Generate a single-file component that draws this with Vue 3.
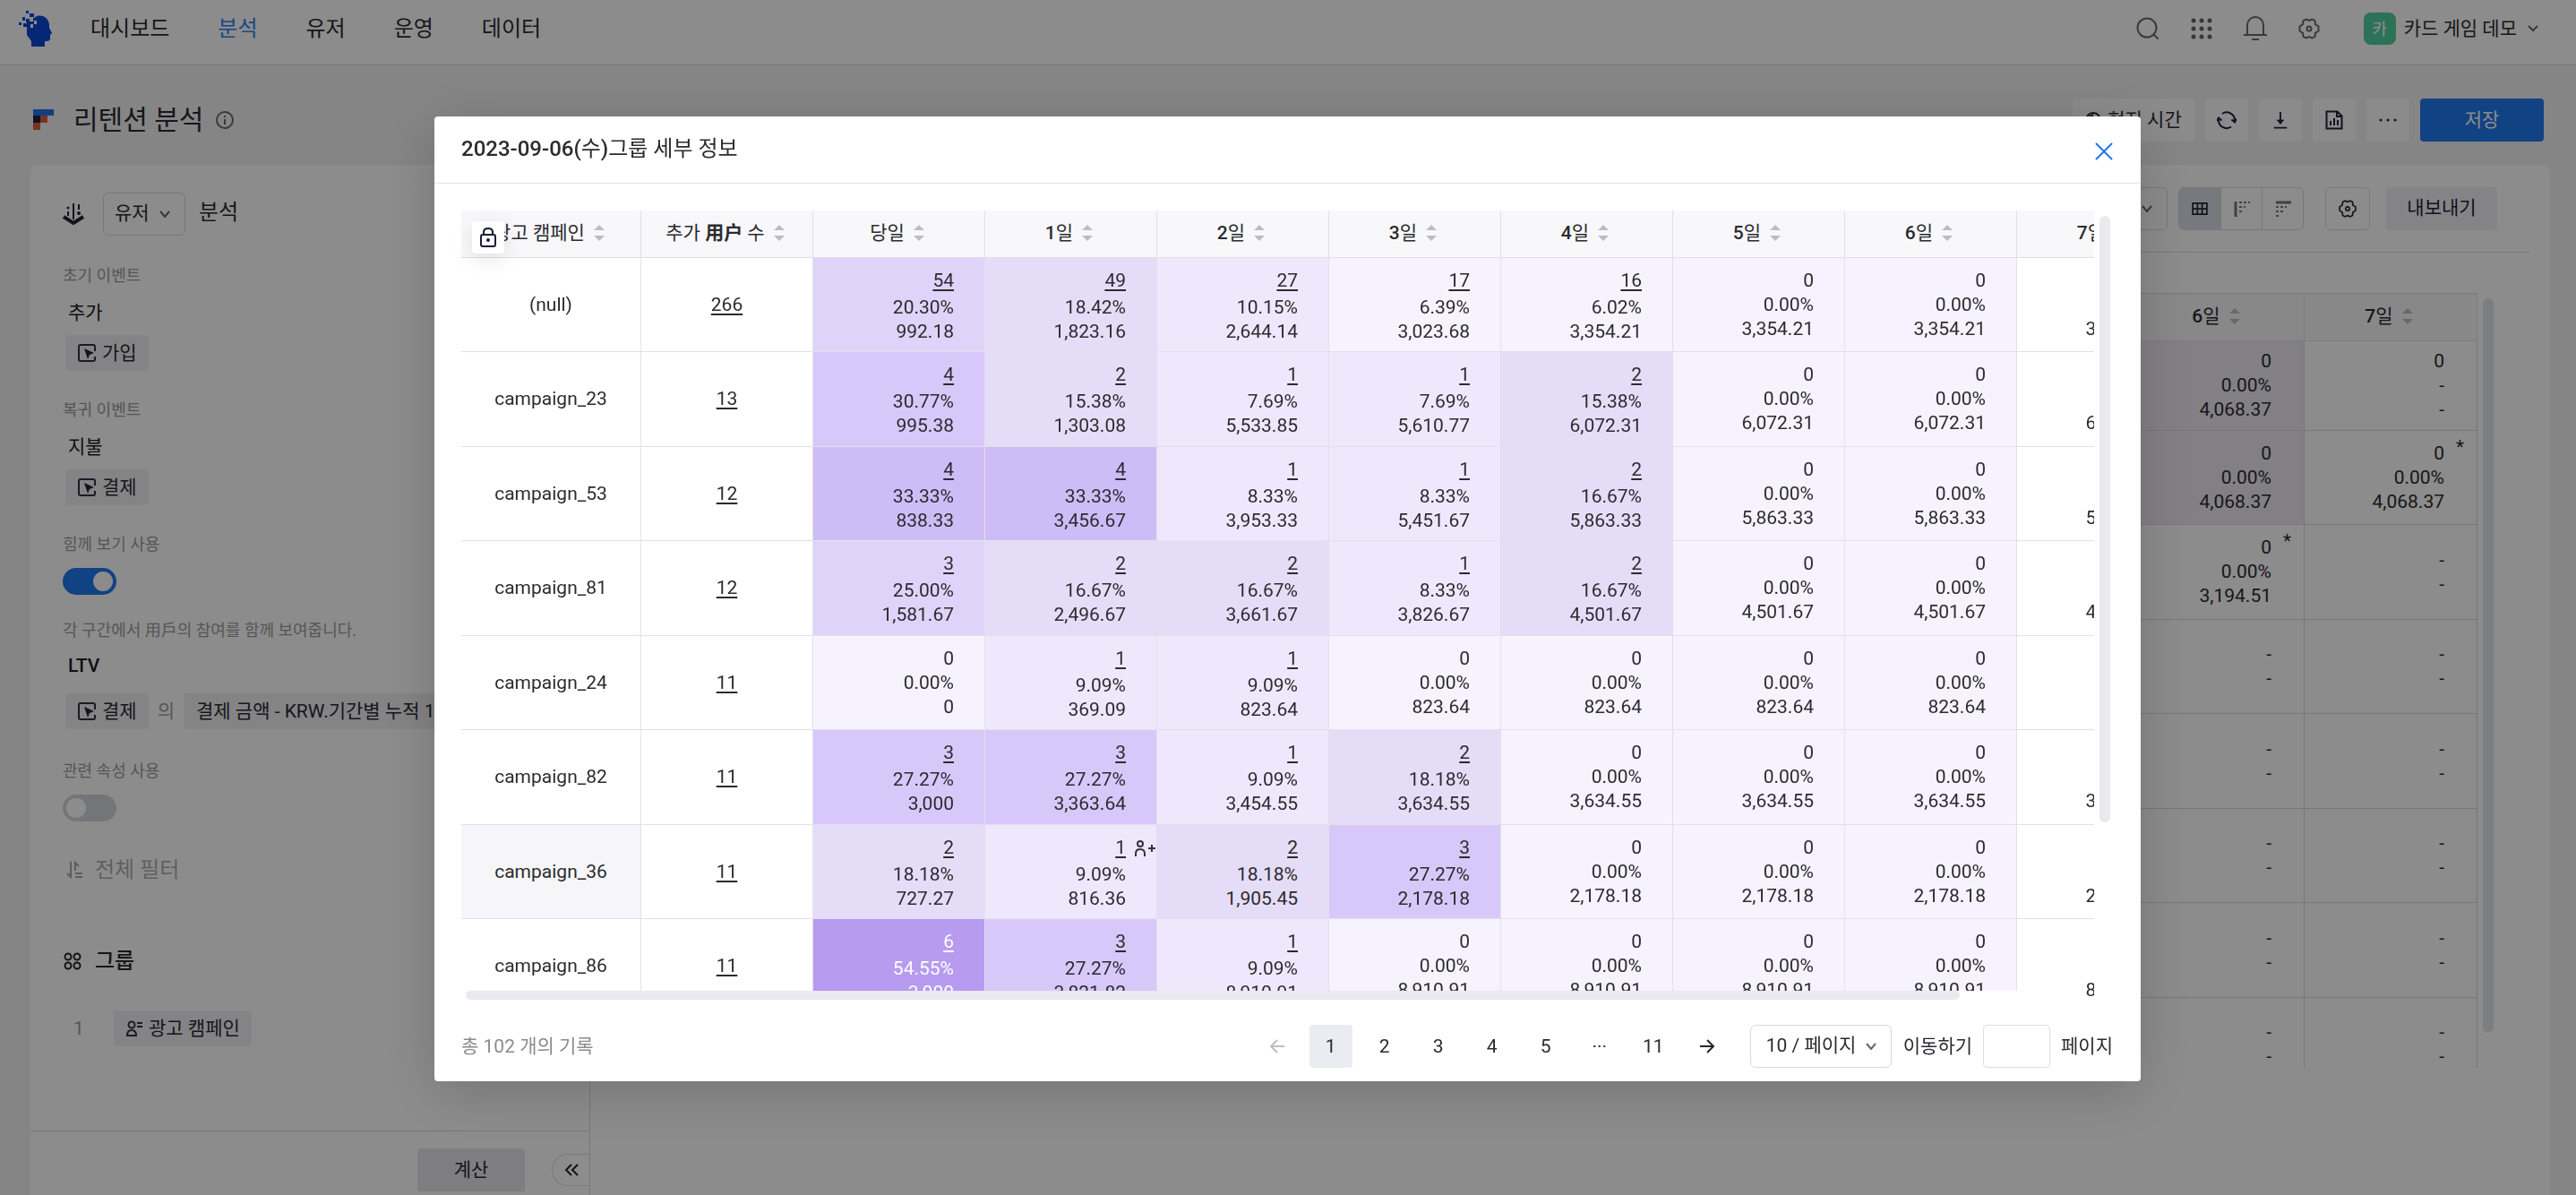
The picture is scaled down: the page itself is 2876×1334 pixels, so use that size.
<script setup>
import { ref } from 'vue'

const nav = ['대시보드', '분석', '유저', '운영', '데이터']
const togetherOn = ref(true)
const relatedOn = ref(false)
const jump = ref('')

const days = ['', '1', '2', '3', '4', '5', '6', '7']
const raw = [
  ['(null)', 266, [54, '20.30%', '992.18'], [49, '18.42%', '1,823.16'], [27, '10.15%', '2,644.14'], [17, '6.39%', '3,023.68'], [16, '6.02%', '3,354.21'], '3,354.21'],
  ['campaign_23', 13, [4, '30.77%', '995.38'], [2, '15.38%', '1,303.08'], [1, '7.69%', '5,533.85'], [1, '7.69%', '5,610.77'], [2, '15.38%', '6,072.31'], '6,072.31'],
  ['campaign_53', 12, [4, '33.33%', '838.33'], [4, '33.33%', '3,456.67'], [1, '8.33%', '3,953.33'], [1, '8.33%', '5,451.67'], [2, '16.67%', '5,863.33'], '5,863.33'],
  ['campaign_81', 12, [3, '25.00%', '1,581.67'], [2, '16.67%', '2,496.67'], [2, '16.67%', '3,661.67'], [1, '8.33%', '3,826.67'], [2, '16.67%', '4,501.67'], '4,501.67'],
  ['campaign_24', 11, [0, '0.00%', '0'], [1, '9.09%', '369.09'], [1, '9.09%', '823.64'], [0, '0.00%', '823.64'], [0, '0.00%', '823.64'], '823.64'],
  ['campaign_82', 11, [3, '27.27%', '3,000'], [3, '27.27%', '3,363.64'], [1, '9.09%', '3,454.55'], [2, '18.18%', '3,634.55'], [0, '0.00%', '3,634.55'], '3,634.55'],
  ['campaign_36', 11, [2, '18.18%', '727.27'], [1, '9.09%', '816.36'], [2, '18.18%', '1,905.45'], [3, '27.27%', '2,178.18'], [0, '0.00%', '2,178.18'], '2,178.18'],
  ['campaign_86', 11, [6, '54.55%', '3,000'], [3, '27.27%', '3,821.82'], [1, '9.09%', '8,910.91'], [0, '0.00%', '8,910.91'], [0, '0.00%', '8,910.91'], '8,910.91'],
]

const steps = [50, 32, 26, 20, 15, 7]
function heat(rate) {
  const v = parseFloat(rate)
  const i = steps.findIndex((s) => v >= s)
  return 'h' + (i < 0 ? 0 : 6 - i)
}

const rows = raw.map(([name, users, ...rest]) => {
  const tail = rest.pop()
  const cells = [...rest, [0, '0.00%', tail], [0, '0.00%', tail], [0, '0.00%', tail]].map(
    ([n, rate, ltv], i) => ({ n, rate, ltv, cls: i === 7 ? 'plain' : heat(rate) })
  )
  return { name, users, cells, active: name === 'campaign_36' }
})

const backRows = [
  [{ t: ['0', '0.00%', '4,068.37'], tint: true }, { t: ['0', '-', '-'] }],
  [{ t: ['0', '0.00%', '4,068.37'], tint: true }, { t: ['0', '0.00%', '4,068.37'], star: true }],
  [{ t: ['0', '0.00%', '3,194.51'], star: true }, { t: ['-', '-'] }],
  ...Array.from({ length: 5 }, () => [{ t: ['-', '-'] }, { t: ['-', '-'] }]),
]
const pages = ['1', '2', '3', '4', '5', '···', '11']
</script>

<template>
  <div class="page">
    <header class="topbar">
      <svg class="logo" viewBox="0 0 38 42" width="38" height="42" aria-hidden="true">
        <path fill="#0b45d8" d="M9 17v-4h4V9h4l3-2c8-2 13 3 14 9v4l3 6-2 2v4c0 3-3 3-6 3v6H14v-6l-5-7z" />
        <path fill="#0b45d8" d="M8 1h3v3H8zM12 4h5v4h-5zM4 8h3v4H4zM8 10h4v4H8zM0 14h3v3H0zM5 15h5v4H5z" />
        <path fill="#fff" d="M13 9h3v4h-3zM17 12h3v4h-3zM13 16h3v4h-3z" />
      </svg>
      <nav>
        <a v-for="n in nav" :key="n" href="#" :class="{ on: n === '분석' }">{{ n }}</a>
      </nav>
      <div class="tools">
        <button aria-label="검색"><svg viewBox="0 0 26 26" width="26" height="26" class="ln"><circle cx="12" cy="12" r="10.5" /><path d="M19.500 19.500l5 5" /></svg></button>
        <button aria-label="앱"><svg viewBox="0 0 26 26" width="26" height="26" fill="#666"><template v-for="y in 3" :key="y"><circle v-for="x in 3" :key="x" :cx="x * 9 - 5" :cy="y * 9 - 5" r="2.500" /></template></svg></button>
        <button aria-label="알림"><svg viewBox="0 0 26 28" width="26" height="28" class="ln"><path d="M0 21h26M4 21V10a9 9 0 0 1 18 0v11M9 26h8" /></svg></button>
        <button aria-label="설정"><svg viewBox="0 0 26 26" width="26" height="26" class="ln"><path d="M9.500 2.500l3.500 1.500 3.500-1.500 3 1.700.5 4 3.500 2.300v5L20 17.800l-.5 4-3 1.700-3.500-1.500-3.500 1.500-3-1.700-.5-4L2.500 15.500v-5L6 8.200l.5-4z" /><circle cx="13" cy="13" r="2.500" /></svg></button>
        <button class="account">
          <span class="avatar">카</span>
          <span>카드 게임 데모</span>
          <svg viewBox="0 0 12 8" width="12" height="8" class="chev"><path d="M1 1l5 5 5-5" /></svg>
        </button>
      </div>
    </header>

    <section class="titlebar">
      <svg viewBox="0 0 24 24" width="24" height="24" aria-hidden="true">
        <path fill="#1f74e8" d="M0 0h23v7H0z" /><path fill="#1b2440" d="M0 7h8v8H0z" /><path fill="#d9603c" d="M8 7h8v8H8zM0 15h8v8H0z" />
      </svg>
      <h1>리텐션 분석</h1>
      <svg viewBox="0 0 20 20" width="20" height="20" class="ln info"><circle cx="10" cy="10" r="9" /><path d="M10 9v6M10 5v2" /></svg>
      <div class="actions">
        <button class="wb local">
          <svg viewBox="0 0 18 18" width="18" height="18"><circle cx="9" cy="9" r="8" fill="none" stroke="#22223a" stroke-width="2" /><path d="M3 5l6-3v5l-3 4-4-2z" fill="#22223a" /></svg>
          현지 시간
        </button>
        <button class="wb" aria-label="새로고침"><svg viewBox="0 0 22 22" width="22" height="22" class="dk"><path d="M6 4a9 9 0 0 1 14 8M16 18.500a9 9 0 0 1-14-8" /><path d="M16.500 10.500l3.500 3 2-4M5.500 11.500L2 8.500 0 12" /></svg></button>
        <button class="wb" aria-label="다운로드"><svg viewBox="0 0 20 22" width="18" height="20" class="dk"><path d="M10 1v13M2 20.500h16" /><path d="M6 11h8l-4 5z" fill="#22223a" stroke-width="1" /></svg></button>
        <button class="wb" aria-label="보고서"><svg viewBox="0 0 20 22" width="20" height="22" class="dk"><path d="M1.500 1.500h12l5 5v14h-17zM13 2v5h5M6 12v5M10 9v8M14 11v6" /></svg></button>
        <button class="wb" aria-label="더보기"><svg viewBox="0 0 20 4" width="20" height="4" fill="#22223a"><circle cx="2" cy="2" r="1.500" /><circle cx="10" cy="2" r="1.500" /><circle cx="18" cy="2" r="1.500" /></svg></button>
        <button class="save">저장</button>
      </div>
    </section>

    <main class="card">
      <aside class="side">
        <div class="side-body">
          <div class="line first">
            <svg viewBox="0 0 24 24" width="24" height="24" fill="none" stroke="#26262e"><path stroke-width="4" d="M1 15l11 7 11-7" /><path stroke-width="2" d="M12 0v18M6 9v5M18 1v6" /><circle cx="6" cy="5" r="1.500" fill="#26262e" stroke="none" /><circle cx="18" cy="11" r="2" fill="#26262e" stroke="none" /></svg>
            <span class="sel small">
              <select aria-label="분석 주체"><option>유저</option></select>
              <svg viewBox="0 0 12 8" width="12" height="8" class="chev"><path d="M1 1l5 6 5-6" /></svg>
            </span>
            <span class="big">분석</span>
          </div>
          <p class="label l1">초기 이벤트</p>
          <p class="value">추가</p>
          <button class="tag"><svg viewBox="0 0 20 20" width="20" height="20"><path d="M19 8V3q0-2-2-2H3Q1 1 1 3v14q0 2 2 2h14q2 0 2-2v-3" fill="none" stroke="#33333b" stroke-width="2" /><path d="M7 5l11 5-5 2-2 5z" fill="#26262e" /></svg>가입</button>
          <p class="label l2">복귀 이벤트</p>
          <p class="value">지불</p>
          <button class="tag"><svg viewBox="0 0 20 20" width="20" height="20"><path d="M19 8V3q0-2-2-2H3Q1 1 1 3v14q0 2 2 2h14q2 0 2-2v-3" fill="none" stroke="#33333b" stroke-width="2" /><path d="M7 5l11 5-5 2-2 5z" fill="#26262e" /></svg>결제</button>
          <label class="label l2" for="together">힘께 보기 사용</label>
          <input id="together" v-model="togetherOn" type="checkbox" class="switch" />
          <p class="label l3">각 구간에서 用戶의 참여를 함께 보여줍니다.</p>
          <p class="value v2">LTV</p>
          <div class="line tags">
            <button class="tag"><svg viewBox="0 0 20 20" width="20" height="20"><path d="M19 8V3q0-2-2-2H3Q1 1 1 3v14q0 2 2 2h14q2 0 2-2v-3" fill="none" stroke="#33333b" stroke-width="2" /><path d="M7 5l11 5-5 2-2 5z" fill="#26262e" /></svg>결제</button>
            <span class="of">의</span>
            <button class="tag">결제 금액 - KRW.기간별 누적 1인당</button>
          </div>
          <label class="label l4" for="related">관련 속성 사용</label>
          <input id="related" v-model="relatedOn" type="checkbox" class="switch" />
          <div class="line filter">
            <svg viewBox="0 0 18 20" width="18" height="20" fill="none" stroke="#a8a8a8" stroke-width="2"><path d="M5 1v17L1 14M10 11V2l4 4M10 14h8M10 18h8" /></svg>
            <span>전체 필터</span>
          </div>
          <div class="line group">
            <svg viewBox="0 0 20 20" width="20" height="20" fill="none" stroke="#26262e" stroke-width="2"><circle cx="5" cy="5" r="3.500" /><circle cx="15" cy="5" r="3.500" /><circle cx="5" cy="15" r="3.500" /><circle cx="15" cy="15" r="3.500" /></svg>
            <span>그룹</span>
          </div>
          <div class="line item">
            <span class="num">1</span>
            <button class="tag"><svg viewBox="0 0 18 18" width="18" height="18" fill="none" stroke="#33333b" stroke-width="2"><circle cx="6" cy="5" r="3.500" /><path d="M1 17q0-6 5-6t5 6zM12 3h6M12 7h6" /></svg>광고 캠페인</button>
          </div>
        </div>
        <div class="side-foot">
          <button class="calc">계산</button>
          <button class="fold" aria-label="접기"><svg viewBox="0 0 16 14" width="16" height="14" class="dk"><path d="M8 1L2 7l6 6M15 1L9 7l6 6" /></svg></button>
        </div>
      </aside>

      <section class="result">
        <div class="bar">
          <span class="sel wide">
            <select aria-label="기간"><option></option></select>
            <svg viewBox="0 0 12 8" width="12" height="8" class="chev"><path d="M1 1l5 6 5-6" /></svg>
          </span>
          <div class="seg">
            <button class="on" aria-label="표"><svg viewBox="0 0 20 16" width="18" height="14" fill="none" stroke="#26262e" stroke-width="2"><path d="M1 1h18v14H1zM1 8h18M7 1v14M13 1v14" /></svg></button>
            <button aria-label="세로"><svg viewBox="0 0 18 18" width="18" height="18" fill="none" stroke="#77777c" stroke-width="2"><path d="M2 1v17" stroke-width="3" /><path stroke-dasharray="3 2" d="M6 2h12M6 7h7M6 12h3" /></svg></button>
            <button aria-label="가로"><svg viewBox="0 0 18 18" width="18" height="18" fill="none" stroke="#77777c" stroke-width="2"><path d="M1 2h17" stroke-width="3" /><path stroke-dasharray="3 2" d="M1 7h12M1 12h8M1 17h3" /></svg></button>
          </div>
          <button class="ob" aria-label="표 설정"><svg viewBox="0 0 26 26" width="22" height="22" fill="none" stroke="#26262e" stroke-width="2"><path d="M9.500 2.500l3.500 1.500 3.500-1.500 3 1.700.5 4 3.500 2.300v5L20 17.800l-.5 4-3 1.700-3.500-1.500-3.500 1.500-3-1.700-.5-4L2.500 15.500v-5L6 8.200l.5-4z" /><circle cx="13" cy="13" r="2.500" /></svg></button>
          <button class="export">내보내기</button>
        </div>
        <div class="back-wrap">
          <div class="back-clip">
            <table class="back">
              <thead>
                <tr>
                  <th v-for="d in ['6', '7']" :key="d"><span class="th"><span><b>{{ d }}</b>일</span><svg viewBox="0 0 12 18" width="12" height="18" class="sort"><path d="M0 6l6-6 6 6zM0 12l6 6 6-6z" /></svg></span></th>
                </tr>
              </thead>
              <tbody>
                <tr v-for="(r, i) in backRows" :key="i">
                  <td v-for="(c, j) in r" :key="j" :class="{ tint: c.tint }">
                    <div v-for="(t, k) in c.t" :key="k">{{ t }}</div>
                    <span v-if="c.star" class="star">*</span>
                  </td>
                </tr>
              </tbody>
            </table>
          </div>
          <div class="vbar dim"></div>
        </div>
      </section>
    </main>

    <div class="mask">
      <div class="modal" role="dialog" aria-labelledby="mt">
        <div class="m-head">
          <h2 id="mt"><b>2023-09-06(</b>수<b>)</b>그룹 세부 정보</h2>
          <button class="close" aria-label="닫기"><svg viewBox="0 0 20 20" width="20" height="20"><path d="M1 1l18 18M19 1L1 19" stroke="#1f78ee" stroke-width="2" /></svg></button>
        </div>
        <div class="m-body">
          <div class="area">
            <div class="clip">
              <table class="grid">
                <thead>
                  <tr>
                    <th class="c0"><span class="th"><span>광고 캠페인</span><svg viewBox="0 0 12 18" width="12" height="18" class="sort"><path d="M0 6l6-6 6 6zM0 12l6 6 6-6z" /></svg></span></th>
                    <th><span class="th"><span>추가 <strong>用户</strong> 수</span><svg viewBox="0 0 12 18" width="12" height="18" class="sort"><path d="M0 6l6-6 6 6zM0 12l6 6 6-6z" /></svg></span></th>
                    <th v-for="d in days" :key="d"><span class="th"><span v-if="d"><b>{{ d }}</b>일</span><span v-else>당일</span><svg viewBox="0 0 12 18" width="12" height="18" class="sort"><path d="M0 6l6-6 6 6zM0 12l6 6 6-6z" /></svg></span></th>
                  </tr>
                </thead>
                <tbody>
                  <tr v-for="r in rows" :key="r.name">
                    <td class="name" :class="{ active: r.active }">{{ r.name }}</td>
                    <td class="name"><a href="#">{{ r.users }}</a></td>
                    <td v-for="(c, i) in r.cells" :key="i" class="cell" :class="c.cls">
                      <div v-if="c.n" class="n"><a href="#">{{ c.n }}</a></div>
                      <div v-else>{{ c.n }}</div>
                      <div>{{ c.rate }}</div>
                      <div>{{ c.ltv }}</div>
                      <svg v-if="r.active && i === 1" class="add" viewBox="0 0 24 18" width="24" height="18" fill="none" stroke="#33333b" stroke-width="2"><circle cx="7" cy="4" r="3" /><path d="M2 18v-3q0-5 5-5t5 5v3M16 9h8M20 5v8" /></svg>
                    </td>
                  </tr>
                </tbody>
              </table>
            </div>
            <button class="lock" aria-label="열 고정"><svg viewBox="0 0 18 22" width="18" height="22" fill="none" stroke="#1b1b35" stroke-width="2"><rect x="1" y="8" width="16" height="13" rx="2" /><path d="M4 8V5q0-4 5-4t5 4v3" /><circle cx="9" cy="14" r="2" fill="#1b1b35" stroke="none" /></svg></button>
            <div class="htrack"><div class="hbar"></div></div>
          </div>
          <div class="vbar"></div>
        </div>
        <div class="m-foot">
          <span class="total">총 102 개의 기록</span>
          <button class="arrow" aria-label="이전"><svg viewBox="0 0 18 16" width="18" height="16" fill="none" stroke="#bcbcc8" stroke-width="2"><path d="M17 8H2M9 1L2 8l7 7" /></svg></button>
          <button v-for="p in pages" :key="p" class="pg" :class="{ cur: p === '1' }">{{ p }}</button>
          <button class="arrow" aria-label="다음"><svg viewBox="0 0 18 16" width="18" height="16" fill="none" stroke="#26262e" stroke-width="2"><path d="M1 8h15M9 1l7 7-7 7" /></svg></button>
          <span class="sel per">
            <select aria-label="페이지 크기"><option>10 / 페이지</option></select>
            <svg viewBox="0 0 12 8" width="12" height="8" class="chev"><path d="M1 1l5 6 5-6" /></svg>
          </span>
          <label for="jump">이동하기</label>
          <input id="jump" v-model="jump" type="text" />
          <span>페이지</span>
        </div>
      </div>
    </div>
  </div>
</template>

<style>
body { margin: 0; overflow: hidden; }
</style>

<style scoped>
* { box-sizing: border-box; }
.page {
  height: 100vh; display: flex; flex-direction: column; overflow: hidden;
  background: #f2f2f2; color: #2b2b30;
  font-family: Roboto, "Noto Sans CJK KR", sans-serif; font-size: 21px; line-height: 27px;
}
button, select, input { font: inherit; color: inherit; margin: 0; padding: 0; border: 0; background: none; }
button { display: flex; align-items: center; justify-content: center; flex: none; white-space: nowrap; }
h1, h2, p { margin: 0; font-weight: 400; }
b { font-weight: 500; }
svg { flex: none; display: block; }
a { color: inherit; text-decoration: none; }
.ln { fill: none; stroke: #6a6a6a; stroke-width: 2; }
.dk { fill: none; stroke: #22223a; stroke-width: 2; }
.chev { fill: none; stroke: #66666c; stroke-width: 2; }

.topbar { flex: none; height: 73px; display: flex; align-items: center; background: #fff; border-bottom: 1px solid #d8d8d8; padding: 0 42px 8px 21px; }
nav { display: flex; gap: 54px; margin-left: 42px; font-size: 24px; }
.on { color: #2f80ed; }
.tools { margin-left: auto; display: flex; align-items: center; gap: 34px; }
.account { gap: 9px; margin-left: 14px; }
.account .chev { margin-left: 3px; }
.avatar { width: 36px; height: 36px; border-radius: 8px; background: #50cfa2; color: #fff; font-size: 18px; display: flex; align-items: center; justify-content: center; }

.titlebar { flex: none; height: 111px; display: flex; align-items: center; padding: 11px 36px 0 37px; }
h1 { font-size: 30px; line-height: 36px; margin-left: 21px; }
.info { margin-left: 14px; }
.actions { margin-left: auto; display: flex; gap: 12px; }
.wb { width: 48px; height: 48px; border-radius: 4px; background: #fdfdfd; }
.local { width: 136px; gap: 7px; }
.save { width: 138px; height: 48px; border-radius: 4px; background: #1f78ee; color: #fff; }

.card { flex: 1; min-height: 0; margin: 0 29px 0 34px; background: #fff; border-radius: 8px 8px 0 0; display: flex; }
.side { width: 625px; flex: none; display: flex; flex-direction: column; border-right: 1px solid #dcdcdf; }
.side-body { flex: 1; padding: 31px 0 0 36px; display: flex; flex-direction: column; align-items: flex-start; overflow: hidden; }
.line { display: flex; align-items: center; flex: none; }
.first { height: 48px; }
.sel { position: relative; height: 48px; border: 1px solid #dadade; border-radius: 6px; display: flex; align-items: center; }
.sel select { appearance: none; width: 100%; height: 100%; padding: 0 0 2px 12px; }
.sel .chev { position: absolute; right: 16px; pointer-events: none; }
.small { width: 92px; margin: 0 15px 0 21px; }
.big { font-size: 24px; padding-bottom: 4px; }
.label { font-size: 18px; line-height: 24px; color: #9c9c9c; flex: none; }
.l1 { margin-top: 33px; }
.l2 { margin-top: 32px; }
.l3 { margin-top: 28px; }
.l4 { margin-top: 35px; }
.value { margin: 14px 0 10px 6px; line-height: 30px; color: #1c1c22; flex: none; }
.v2 { margin: 12px 0 16px 6px; font-weight: 500; }
.tag { height: 40px; padding: 0 13px 0 14px; gap: 7px; margin-left: 3px; border-radius: 4px; background: #f0f0f4; }
.tags { gap: 10px; }
.tags .tag + .of + .tag { margin-left: 0; }
.of { color: #9c9c9c; }
.switch { appearance: none; flex: none; width: 60px; height: 30px; border-radius: 15px; background: #d2d6dd; margin-top: 14px; padding: 4px; display: flex; }
.switch::before { content: ""; width: 22px; height: 22px; border-radius: 11px; background: #fff; }
.switch:checked { background: #1f78ee; justify-content: flex-end; }
.filter { margin: 39px 0 0 4px; gap: 14px; font-size: 24px; line-height: 30px; color: #b0b0b0; }
.group { margin: 72px 0 0 1px; gap: 15px; font-size: 24px; line-height: 30px; font-weight: 500; }
.item { margin-top: 40px; }
.num { width: 36px; line-height: 36px; text-align: center; color: #9c9c9c; }
.item .tag { margin-left: 21px; }
.side-foot { flex: none; height: 72px; border-top: 1px solid #d8d8dc; display: flex; align-items: flex-start; justify-content: flex-end; padding-top: 19px; gap: 30px; }
.calc { width: 120px; height: 48px; border-radius: 4px 4px 0 0; background: #e5e5ec; }
.fold { width: 42px; height: 36px; margin-top: 6px; border: 1px solid #dcdcdf; border-right: 0; border-radius: 18px 0 0 18px; }

.result { flex: 1; min-width: 0; padding: 25px 23px 0 24px; }
.bar { display: flex; justify-content: flex-end; align-items: center; height: 73px; padding: 0 36px 25px 0; border-bottom: 1px solid #dadade; }
.wide { width: 160px; margin-right: 12px; }
.seg { display: flex; height: 48px; border: 1px solid #dadade; border-radius: 6px; overflow: hidden; margin-right: 24px; }
.seg button { width: 46px; border-left: 1px solid #dadade; }
.seg button.on { background: #d8dfe6; border: 0; }
.ob { width: 50px; height: 48px; border: 1px solid #dadade; border-radius: 6px; margin-right: 18px; }
.export { width: 124px; height: 48px; border-radius: 4px; background: #f0f0f4; color: #22223a; }
.back-wrap { margin-top: 45px; display: flex; justify-content: flex-end; gap: 6px; padding-right: 40px; }
.back-clip { height: 865px; overflow: hidden; }
table { border-collapse: separate; border-spacing: 0; table-layout: fixed; }
th, td { padding: 0; position: relative; border-right: 1px solid #e2e0e8; border-bottom: 1px solid #e2e0e8; }
th { height: 53px; background: #f8f8fa; font-weight: 400; border-color: #e0e0e4; }
.th { display: flex; align-items: center; justify-content: center; gap: 10px; white-space: nowrap; padding: 0 4px 2px 0; }
.sort { fill: #bdbdbf; }
.back { width: 386px; border-top: 1px solid #dcdce0; }
.back td { height: 106px; border-color: #d9d9de; text-align: right; padding-right: 36px; }
.back tr:nth-child(even) td { height: 105px; }
.back tr:first-child td { height: 100px; }
.back .tint { background: #efe9f3; }
.star { position: absolute; right: 14px; top: 5px; }
.vbar { width: 12px; height: 677px; border-radius: 6px; background: #e9e9ee; margin-top: 6px; flex: none; }
.dim { height: 820px; background: #e3e5ea; }

.mask { position: fixed; inset: 0; background: rgba(0, 0, 0, 0.45); padding: 130px 486px 0 485px; }
.modal { background: #fff; border-radius: 4px; box-shadow: 0 12px 64px rgba(0, 0, 0, 0.18); }
.m-head { height: 75px; border-bottom: 1px solid #e4e4e8; display: flex; align-items: center; justify-content: space-between; padding: 0 31px 0 30px; }
h2 { font-size: 24px; line-height: 30px; padding-bottom: 3px; }
.close { width: 20px; padding-top: 4px; }
.m-body { display: flex; gap: 6px; padding: 30px 34px 0 30px; }
.area { position: relative; flex: 1; min-width: 0; height: 881px; }
.clip { height: 877px; overflow: hidden; }
.grid { width: 1929px; }
.grid th { width: 192px; }
.grid .c0 { width: 201px; }
.grid td { height: 105px; }
.grid tbody tr:nth-child(even) td { height: 106px; }
.name { text-align: center; }
.active { background: #f6f6f8; }
.name a, .n a { text-decoration: underline; text-decoration-thickness: 2px; text-underline-offset: 3px; text-decoration-skip-ink: none; }
.cell { vertical-align: top; text-align: right; padding: 12px 34px 0 0; }
.n { padding-bottom: 3px; }
.h0 { background: #f6f3fe; }
.h1 { background: #efe8fd; }
.h2 { background: #e5ddf8; }
.h3 { background: #dfd3f9; }
.h4 { background: #d8c8fa; }
.h5 { background: #cebcf6; }
.h6 { background: #b69bf1; color: #fff; }
.add { position: absolute; right: 1px; top: 17px; }
.lock { position: absolute; left: 12px; top: 12px; width: 36px; height: 36px; border-radius: 4px; background: #fff; box-shadow: 0 6px 24px rgba(0, 0, 0, 0.1); }
.htrack { position: absolute; left: 0; right: 86px; bottom: 0; height: 10px; background: #fff; padding: 0 64px 0 5px; }
.hbar { height: 10px; border-radius: 5px; background: #e9e9ee; }
.m-foot { display: flex; align-items: center; gap: 12px; padding: 28px 31px 15px 30px; }
.total { margin-right: auto; color: #8c8c8c; }
.arrow, .pg { width: 48px; height: 48px; border-radius: 4px; }
.cur { background: #ebecf1; }
.per { width: 158px; margin: 0 1px 0 12px; }
.per select { padding-left: 17px; }
.m-foot input { width: 75px; height: 48px; border: 1px solid #dedee3; border-radius: 4px; padding: 0 8px; }
</style>
